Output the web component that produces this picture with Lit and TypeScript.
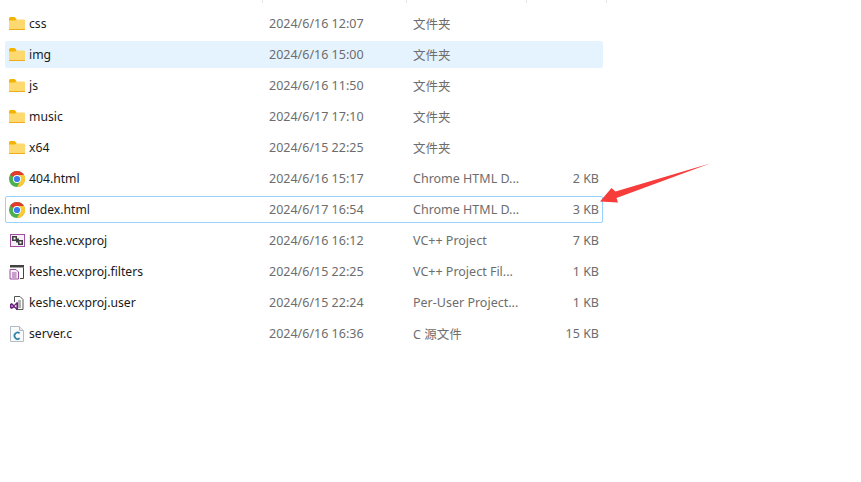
import { css, html, LitElement, svg } from "lit"
import { customElement } from "lit/decorators.js"
import { classMap } from "lit/directives/class-map.js"

type Kind = "folder" | "chrome" | "proj" | "filters" | "user" | "c"

interface FileRow {
  name: string
  date: string
  type: string
  size: string
  icon: Kind
  state?: "hover" | "focus"
}

const rows: FileRow[] = [
  { name: "css", date: "2024/6/16 12:07", type: "文件夹", size: "", icon: "folder" },
  { name: "img", date: "2024/6/16 15:00", type: "文件夹", size: "", icon: "folder", state: "hover" },
  { name: "js", date: "2024/6/16 11:50", type: "文件夹", size: "", icon: "folder" },
  { name: "music", date: "2024/6/17 17:10", type: "文件夹", size: "", icon: "folder" },
  { name: "x64", date: "2024/6/15 22:25", type: "文件夹", size: "", icon: "folder" },
  { name: "404.html", date: "2024/6/16 15:17", type: "Chrome HTML D...", size: "2 KB", icon: "chrome" },
  { name: "index.html", date: "2024/6/17 16:54", type: "Chrome HTML D...", size: "3 KB", icon: "chrome", state: "focus" },
  { name: "keshe.vcxproj", date: "2024/6/16 16:12", type: "VC++ Project", size: "7 KB", icon: "proj" },
  { name: "keshe.vcxproj.filters", date: "2024/6/15 22:25", type: "VC++ Project Fil...", size: "1 KB", icon: "filters" },
  { name: "keshe.vcxproj.user", date: "2024/6/15 22:24", type: "Per-User Project...", size: "1 KB", icon: "user" },
  { name: "server.c", date: "2024/6/16 16:36", type: "C 源文件", size: "15 KB", icon: "c" },
]

const icons: Record<Kind, unknown> = {
  folder: svg`
    <path d="M0 2.5 Q0 1 1.5 1 H5.5 L7.5 3 V5 H0 Z" fill="#f5b301"/>
    <path d="M0 4.5 H6 L7.5 3.5 H15 Q16 3.5 16 4.5 V13 Q16 14 15 14 H1 Q0 14 0 13 Z" fill="#fed96f"/>
    <path d="M0 13 H16 V13.4 Q16 14 15 14 H1 Q0 14 0 13.4 Z" fill="#eeab1c"/>`,
  chrome: svg`
    <circle cx="8" cy="8" r="8" fill="#4caf50"/>
    <path d="M1.1 4 A8 8 0 0 1 14.9 4 H8 A4 4 0 0 0 4.5 6 Z" fill="#e33b2e"/>
    <path d="M15 4 A8 8 0 0 1 8 16 L11.4 10 A4 4 0 0 0 11.4 6 L10 4 Z" fill="#fcc934"/>
    <circle cx="8" cy="8" r="4" fill="#fff"/>
    <circle cx="8" cy="8" r="3.1" fill="#3b7cf0"/>`,
  proj: svg`
    <rect x="1.5" y="1.5" width="14" height="12" fill="#f4f0f6" stroke="#a24ea6"/>
    <path d="M3 3 H8 V5.5 H10 V7 H14 V12 H9 V9.5 H7 V8 H3 Z" fill="#3f3f3f"/>
    <rect x="4.5" y="4.5" width="2" height="2" fill="#fff"/>
    <rect x="10.5" y="8.5" width="2" height="2" fill="#fff"/>`,
  filters: svg`
    <path d="M1 1 H15 V3.5 H1 Z" fill="#424242"/>
    <path d="M14.5 3.5 V14.5 H11" fill="none" stroke="#424242"/>
    <path d="M1 5.5 H7 L9.5 8 V15 H1 Z" fill="#f5eef6" stroke="#9b4f9f" stroke-width="1"/>
    <path d="M3 9 H7.5 M3 11 H7.5 M3 13 H7.5" stroke="#9b4f9f"/>`,
  user: svg`
    <path d="M5.5 7 V1.5 H11 L14 4.5 V14.5 H7" fill="#fff" stroke="#555"/>
    <path d="M9 6 H12 M9 8 H12 M9 10 H12 M9 12 H12" stroke="#666"/>
    <path d="M1 9 L2.8 8 L5 10 L8 7 L9 7.6 V14.4 L8 15 L5 12.4 L2.8 14 L1 13 Z" fill="#68217a"/>
    <path d="M2.6 10 L4 11 L2.6 12.2 Z M7.4 9.4 V12.8 L5.6 11 Z" fill="#fff"/>`,
  c: svg`
    <path d="M1.5 0.5 H10.5 L14.5 4.5 V15.5 H1.5 Z" fill="#f8fafb" stroke="#b3bcc4"/>
    <path d="M10.5 0.5 V4.5 H14.5" fill="#e4e8ec" stroke="#b3bcc4"/>
    <path d="M10.6 7.2 A3.2 3.2 0 1 0 10.6 12.3" fill="none" stroke="#2f83a8" stroke-width="1.7"/>`,
}

@customElement("app-root")
export class AppRoot extends LitElement {
  static styles = css`
    :host {
      display: block;
      position: relative;
      width: 861px;
      height: 482px;
      overflow: hidden;
      background: #fff;
      font-family: "Noto Sans", "Noto Sans CJK SC", sans-serif;
      font-size: 12.5px;
    }

    .heads {
      display: flex;
      height: 3px;
      padding-left: 262px;
    }

    .heads span {
      border-left: 1px solid #e5e5e5;
      box-sizing: border-box;
    }

    .list {
      display: flex;
      flex-direction: column;
      gap: 4px;
      padding: 7px 0 0 5px;
      width: 598px;
    }

    .row {
      display: grid;
      grid-template-columns: 263px 144px 120px 69px;
      align-items: center;
      height: 27px;
      box-sizing: border-box;
      border: 1px solid transparent;
      border-radius: 2px;
      color: #6d6d6d;
      white-space: nowrap;
    }

    .row.hover {
      background: #e5f3ff;
      border-color: #e5f3ff;
    }

    .row.focus {
      border-color: #99d1ff;
    }

    .name {
      display: flex;
      align-items: center;
      gap: 4px;
      padding-left: 3px;
      color: #1a1a1a;
      font-size: 12.2px;
    }

    .name svg {
      width: 16px;
      height: 16px;
      flex: none;
    }

    .size {
      text-align: right;
      padding-right: 3px;
    }

    .arrow {
      position: absolute;
      left: 596px;
      top: 160px;
      width: 116px;
      height: 48px;
    }
  `

  render() {
    return html`
      <div class="heads">
        <span style="width: 144px"></span>
        <span style="width: 120px"></span>
        <span style="width: 80px"></span>
        <span></span>
      </div>
      <div class="list">
        ${rows.map(r => html`
          <div class=${classMap({ row: true, hover: r.state === "hover", focus: r.state === "focus" })}>
            <div class="name">
              <svg viewBox="0 0 16 16">${icons[r.icon]}</svg>
              <span>${r.name}</span>
            </div>
            <div>${r.date}</div>
            <div>${r.type}</div>
            <div class="size">${r.size}</div>
          </div>
        `)}
      </div>
      <svg class="arrow" viewBox="596 160 116 48">
        <path d="M710 163.5 L615.5 191.5 L611.5 188 L600 201.5 L618 202.5 L616.5 198 Z" fill="#f73c3c"/>
      </svg>
    `
  }
}
